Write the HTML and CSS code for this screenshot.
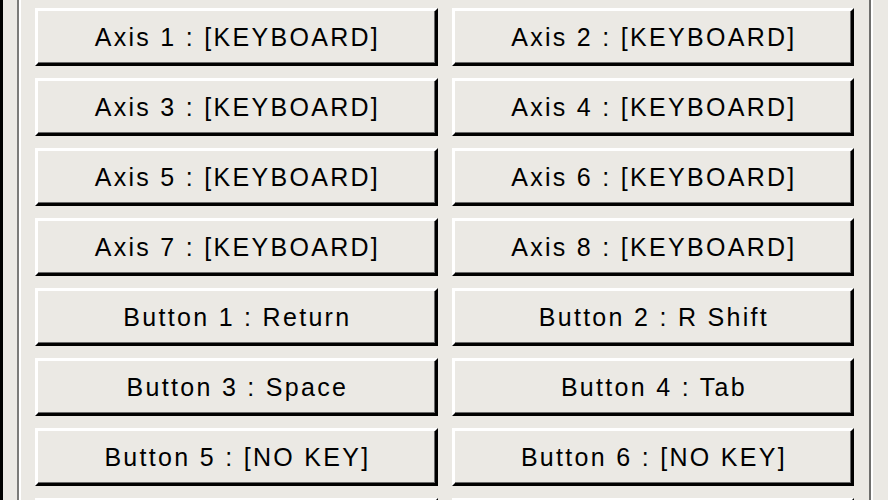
FILE: index.html
```html
<!DOCTYPE html>
<html lang="en">
<head>
<meta charset="utf-8">
<title>Joystick Configuration</title>
<link rel="stylesheet" href="styles.css">
</head>
<body>
<div class="window">
  <div class="group-outer">
    <div class="group-inner">
      <div class="grid">
        <div class="btn">Axis 1 : [KEYBOARD]</div>
        <div class="btn">Axis 2 : [KEYBOARD]</div>
        <div class="btn">Axis 3 : [KEYBOARD]</div>
        <div class="btn">Axis 4 : [KEYBOARD]</div>
        <div class="btn">Axis 5 : [KEYBOARD]</div>
        <div class="btn">Axis 6 : [KEYBOARD]</div>
        <div class="btn">Axis 7 : [KEYBOARD]</div>
        <div class="btn">Axis 8 : [KEYBOARD]</div>
        <div class="btn">Button 1 : Return</div>
        <div class="btn">Button 2 : R Shift</div>
        <div class="btn">Button 3 : Space</div>
        <div class="btn">Button 4 : Tab</div>
        <div class="btn">Button 5 : [NO KEY]</div>
        <div class="btn">Button 6 : [NO KEY]</div>
        <div class="btn"></div>
        <div class="btn"></div>
      </div>
    </div>
  </div>
</div>
</body>
</html>
```
FILE: styles.css
```css
html, body {
  margin: 0;
  padding: 0;
  height: 100%;
  overflow: hidden;
  background: #ebe9e4;
}
.window {
  height: 100%;
  border-left: 3px solid #000;
  padding-left: 14px;
  padding-right: 15px;
  box-sizing: border-box;
}
.group-outer {
  height: 100%;
  border-left: 2px solid #7a7a78;
  border-right: 2px solid #ffffff;
  box-sizing: border-box;
}
.group-inner {
  height: 100%;
  border-left: 2px solid #ffffff;
  border-right: 2px solid #6e6e6c;
  box-sizing: border-box;
  padding: 8px 15px 0 14px;
}
.grid {
  display: grid;
  grid-template-columns: 1fr 1fr;
  column-gap: 14px;
  row-gap: 12px;
}
.btn {
  height: 58px;
  box-sizing: border-box;
  border-top: 3px solid #ffffff;
  border-left: 3px solid #ffffff;
  border-bottom: 3px solid #000000;
  border-right: 3px solid #000000;
  box-shadow: inset -1px -1px 0 #6a6a6a;
  padding: 14px 0 0 2.3px;
  font-family: "Liberation Sans", Arial, sans-serif;
  font-size: 25px;
  line-height: 24px;
  letter-spacing: 2.3px;
  text-align: center;
  color: #000;
  white-space: nowrap;
}
```
